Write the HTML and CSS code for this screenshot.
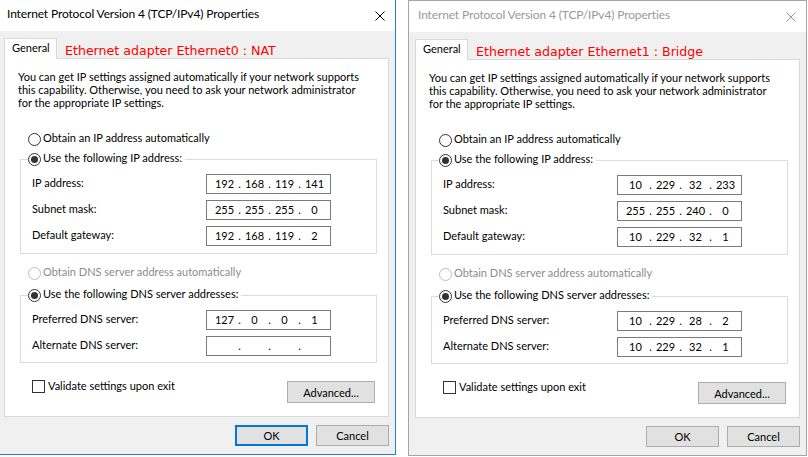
FILE: index.html
```html
<!DOCTYPE html>
<html>
<head>
<meta charset="utf-8">
<title>IPv4 Properties</title>
<link rel="stylesheet" href="styles.css">
</head>
<body>
<div class="desk">

  <section class="dialog dialog--active">
    <header class="titlebar">
      <span class="title">Internet Protocol Version 4 (TCP/IPv4) Properties</span>
      <svg class="close" width="10" height="10" viewBox="0 0 10 10"><path d="M0.5 0.5L9.5 9.5M9.5 0.5L0.5 9.5"/></svg>
    </header>
    <div class="body">
      <div class="tabs">
        <div class="tab">General</div>
        <div class="note">Ethernet adapter Ethernet0 : NAT</div>
      </div>
      <div class="panel">
        <p class="desc">You can get IP settings assigned automatically if your network supports<br>this capability. Otherwise, you need to ask your network administrator<br>for the appropriate IP settings.</p>
        <div class="option option--first"><span class="radio"></span><span>Obtain an IP address automatically</span></div>
        <fieldset class="group group--ip">
          <legend class="legend"><div class="option"><span class="radio radio--on"></span><span>Use the following IP address:</span></div></legend>
          <div class="row"><span class="lbl">IP address:</span><div class="ip"><span class="oct">192</span><span class="dot">.</span><span class="oct">168</span><span class="dot">.</span><span class="oct">119</span><span class="dot">.</span><span class="oct">141</span></div></div>
          <div class="row"><span class="lbl">Subnet mask:</span><div class="ip"><span class="oct">255</span><span class="dot">.</span><span class="oct">255</span><span class="dot">.</span><span class="oct">255</span><span class="dot">.</span><span class="oct">0</span></div></div>
          <div class="row"><span class="lbl">Default gateway:</span><div class="ip"><span class="oct">192</span><span class="dot">.</span><span class="oct">168</span><span class="dot">.</span><span class="oct">119</span><span class="dot">.</span><span class="oct">2</span></div></div>
        </fieldset>
        <div class="option option--disabled"><span class="radio radio--disabled"></span><span>Obtain DNS server address automatically</span></div>
        <fieldset class="group group--dns">
          <legend class="legend"><div class="option"><span class="radio radio--on"></span><span>Use the following DNS server addresses:</span></div></legend>
          <div class="row"><span class="lbl">Preferred DNS server:</span><div class="ip"><span class="oct">127</span><span class="dot">.</span><span class="oct">0</span><span class="dot">.</span><span class="oct">0</span><span class="dot">.</span><span class="oct">1</span></div></div>
          <div class="row"><span class="lbl">Alternate DNS server:</span><div class="ip"><span class="oct"></span><span class="dot">.</span><span class="oct"></span><span class="dot">.</span><span class="oct"></span><span class="dot">.</span><span class="oct"></span></div></div>
        </fieldset>
        <div class="footer">
          <div class="check"><span class="box"></span><span>Validate settings upon exit</span></div>
          <button class="btn btn--adv">Advanced...</button>
        </div>
      </div>
      <div class="actions">
        <button class="btn btn--action btn--default">OK</button>
        <button class="btn btn--action">Cancel</button>
      </div>
    </div>
  </section>

  <section class="dialog dialog--inactive">
    <header class="titlebar">
      <span class="title">Internet Protocol Version 4 (TCP/IPv4) Properties</span>
      <svg class="close" width="10" height="10" viewBox="0 0 10 10"><path d="M0.5 0.5L9.5 9.5M9.5 0.5L0.5 9.5"/></svg>
    </header>
    <div class="body">
      <div class="tabs">
        <div class="tab">General</div>
        <div class="note">Ethernet adapter Ethernet1 : Bridge</div>
      </div>
      <div class="panel">
        <p class="desc">You can get IP settings assigned automatically if your network supports<br>this capability. Otherwise, you need to ask your network administrator<br>for the appropriate IP settings.</p>
        <div class="option option--first"><span class="radio"></span><span>Obtain an IP address automatically</span></div>
        <fieldset class="group group--ip">
          <legend class="legend"><div class="option"><span class="radio radio--on"></span><span>Use the following IP address:</span></div></legend>
          <div class="row"><span class="lbl">IP address:</span><div class="ip"><span class="oct">10</span><span class="dot">.</span><span class="oct">229</span><span class="dot">.</span><span class="oct">32</span><span class="dot">.</span><span class="oct">233</span></div></div>
          <div class="row"><span class="lbl">Subnet mask:</span><div class="ip"><span class="oct">255</span><span class="dot">.</span><span class="oct">255</span><span class="dot">.</span><span class="oct">240</span><span class="dot">.</span><span class="oct">0</span></div></div>
          <div class="row"><span class="lbl">Default gateway:</span><div class="ip"><span class="oct">10</span><span class="dot">.</span><span class="oct">229</span><span class="dot">.</span><span class="oct">32</span><span class="dot">.</span><span class="oct">1</span></div></div>
        </fieldset>
        <div class="option option--disabled"><span class="radio radio--disabled"></span><span>Obtain DNS server address automatically</span></div>
        <fieldset class="group group--dns">
          <legend class="legend"><div class="option"><span class="radio radio--on"></span><span>Use the following DNS server addresses:</span></div></legend>
          <div class="row"><span class="lbl">Preferred DNS server:</span><div class="ip"><span class="oct">10</span><span class="dot">.</span><span class="oct">229</span><span class="dot">.</span><span class="oct">28</span><span class="dot">.</span><span class="oct">2</span></div></div>
          <div class="row"><span class="lbl">Alternate DNS server:</span><div class="ip"><span class="oct">10</span><span class="dot">.</span><span class="oct">229</span><span class="dot">.</span><span class="oct">32</span><span class="dot">.</span><span class="oct">1</span></div></div>
        </fieldset>
        <div class="footer">
          <div class="check"><span class="box"></span><span>Validate settings upon exit</span></div>
          <button class="btn btn--adv">Advanced...</button>
        </div>
      </div>
      <div class="actions">
        <button class="btn btn--action">OK</button>
        <button class="btn btn--action">Cancel</button>
      </div>
    </div>
  </section>

</div>
</body>
</html>
```
FILE: styles.css
```css
* { box-sizing: border-box; }

html, body { margin: 0; padding: 0; }

body {
  width: 808px;
  height: 457px;
  overflow: hidden;
  background: #ffffff;
  font-family: Lato, "Noto Sans", sans-serif;
  font-size: 11px;
  color: #000;
}

.desk {
  display: flex;
  align-items: flex-start;
}

.dialog {
  flex: none;
  width: 399px;
  border: 1px solid #a5a5a5;
  background: #f0f0f0;
}

.dialog--active {
  border-color: #1883d7;
  margin: -1px 0 0 -3px;
}

.dialog--inactive {
  margin-left: 12px;
}

.titlebar {
  height: 31px;
  background: #fff;
  display: flex;
  align-items: flex-start;
  padding: 6px 10px 0 9px;
}

.title {
  font-size: 12px;
  letter-spacing: -0.14px;
  line-height: 16px;
  white-space: nowrap;
}

.close {
  margin-left: auto;
  margin-top: 5px;
  stroke: #000;
  stroke-width: 1;
  fill: none;
}

.dialog--inactive .title { color: #999; }
.dialog--inactive .close { stroke: #999; }

.body {
  padding: 7px 6px 8px 6px;
}

.tabs {
  display: flex;
  align-items: flex-start;
  height: 20px;
}

.tab {
  position: relative;
  z-index: 1;
  width: 53px;
  height: 21px;
  padding-left: 7px;
  line-height: 17px;
  background: #fff;
  border: 1px solid #d9d9d9;
  border-bottom: none;
}

.note {
  margin: 5px 0 0 8px;
  font-family: "DejaVu Sans", sans-serif;
  font-size: 12.6px;
  color: #ff0000;
  white-space: nowrap;
}

.panel {
  height: 359px;
  background: #fff;
  border: 1px solid #d9d9d9;
  display: flex;
  flex-direction: column;
  align-items: flex-start;
}

.desc {
  margin: 11px 0 0 13px;
  line-height: 13px;
  white-space: nowrap;
}

.option {
  display: flex;
  align-items: flex-start;
  gap: 2px;
  height: 16px;
  line-height: 16px;
  white-space: nowrap;
}

.option--first { margin: 21px 0 0 23px; }

.option--disabled {
  margin: 10px 0 0 23px;
  color: #8c8c8c;
}

.radio {
  flex: none;
  width: 13px;
  height: 13px;
  margin-top: 3px;
  border: 1px solid #333;
  border-radius: 50%;
  background: #fff;
  display: grid;
  place-items: center;
}

.radio--on::after {
  content: "";
  width: 7px;
  height: 7px;
  border-radius: 50%;
  background: #333;
}

.radio--disabled { border-color: #bcbcbc; }

.group {
  align-self: stretch;
  min-width: 0;
  margin: 4px 11px 0 15px;
  padding: 5px 0 7px 0;
  border: 1px solid #dcdcdc;
}

.group--dns {
  margin-top: 6px;
  padding-bottom: 6px;
}

.legend {
  height: 19px;
  margin-left: 7px;
  padding: 0 3px 0 0;
}

.row {
  display: flex;
  align-items: flex-start;
  height: 20px;
  padding-left: 11px;
  line-height: 18px;
}

.row + .row { margin-top: 6px; }

.lbl {
  flex: none;
  width: 174px;
  white-space: nowrap;
}

.ip {
  flex: none;
  width: 125px;
  height: 20px;
  border: 1px solid #7a7a7a;
  background: #fff;
  display: flex;
  padding-left: 6px;
  line-height: 18px;
}

.oct {
  width: 23px;
  text-align: center;
}

.dot {
  width: 7px;
  text-align: center;
}

.footer {
  align-self: stretch;
  display: flex;
  align-items: flex-start;
  margin-top: 15px;
  padding: 0 13px 0 27px;
}

.check {
  display: flex;
  align-items: flex-start;
  gap: 3px;
  line-height: 16px;
  white-space: nowrap;
}

.box {
  flex: none;
  width: 13px;
  height: 13px;
  margin-top: 2px;
  border: 1px solid #333;
  background: #fff;
}

.btn {
  font-family: inherit;
  font-size: inherit;
  color: #000;
  background: #e1e1e1;
  border: 1px solid #adadad;
  padding: 0;
  margin: 0;
}

.btn--adv {
  margin-left: auto;
  margin-top: 3px;
  width: 88px;
  height: 22px;
}

.actions {
  display: flex;
  justify-content: flex-end;
  gap: 8px;
  margin-top: 8px;
}

.btn--action {
  width: 73px;
  height: 21px;
}

.btn--default {
  border: 2px solid #0078d7;
}
```
